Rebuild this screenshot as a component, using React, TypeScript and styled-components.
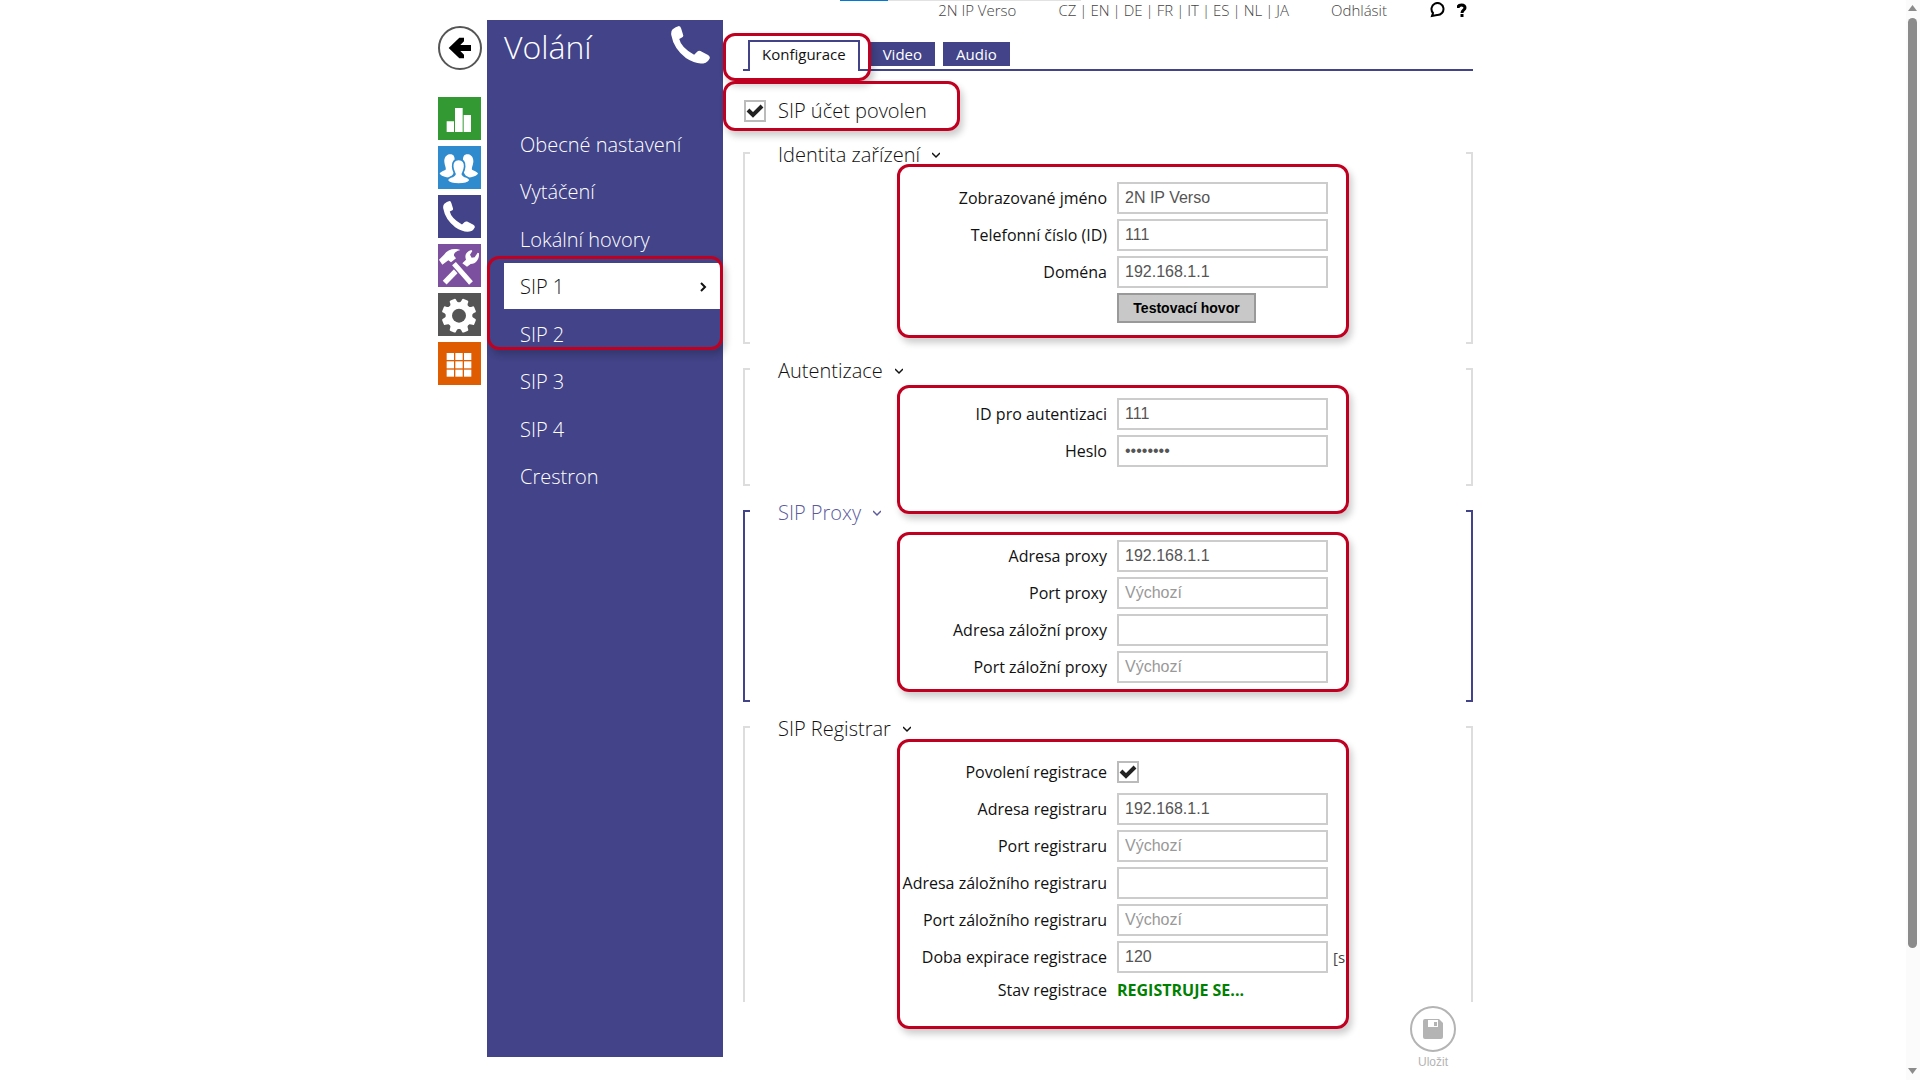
import React, { useState } from "react";
import styled, { createGlobalStyle } from "styled-components";

const indigo = "#424388";
const red = "#c00020";
const uiFont = `"Open Sans", "Noto Sans", sans-serif`;
const fieldFont = `"Liberation Sans", Arial, sans-serif`;

const GlobalStyle = createGlobalStyle`
  *, *::before, *::after { box-sizing: border-box; }
  body {
    margin: 0;
    background: #fff;
    color: #111;
    font-family: ${uiFont};
    font-size: 14px;
    overflow: hidden;
  }
  a { color: inherit; text-decoration: none; }
  svg { display: block; }
`;

const Page = styled.div`
  display: grid;
  grid-template-columns: 1fr 14px;
  height: 100vh;
  overflow: hidden;
`;

const Stage = styled.div`
  padding-left: 5px;
  overflow: hidden;
`;

const Shell = styled.div`
  display: grid;
  grid-template-columns: 44px 236px minmax(0, 1fr);
  column-gap: 5px;
  max-width: 1035px;
  margin: 0 auto;
`;

const Rail = styled.nav`
  display: flex;
  flex-direction: column;
  align-items: flex-start;
  gap: 6px;
  padding-top: 26px;
`;

const BackButton = styled.button`
  display: grid;
  place-items: center;
  width: 44px;
  height: 44px;
  margin-bottom: 21px;
  padding: 0;
  border: 2px solid #555;
  border-radius: 50%;
  background: #fff;
`;

const RailLink = styled.a<{ $color: string }>`
  display: block;
  width: 43px;
  height: 43px;
  background: ${(p) => p.$color};
`;

const Panel = styled.aside`
  align-self: start;
  margin-top: 20px;
  min-height: calc(100vh - 43px);
  padding-left: 17px;
  background: ${indigo};
  color: #fff;
  font-weight: 300;
`;

const PanelHead = styled.header`
  display: flex;
  justify-content: space-between;
  align-items: flex-start;
  height: 100px;
  padding: 6px 13px 0 0;
`;

const PanelTitle = styled.h1`
  margin: 0;
  font-size: 32px;
  line-height: 42px;
  font-weight: 300;
`;

const Menu = styled.div`
  position: relative;
  display: flex;
  flex-direction: column;
  justify-content: space-between;
  height: 379px;
  padding-right: 3px;
`;

const MenuItem = styled.a<{ $active?: boolean }>`
  display: flex;
  align-items: center;
  justify-content: space-between;
  height: 46px;
  padding: 3px 13px 0 16px;
  font-size: 20px;
  line-height: 28px;
  background: ${(p) => (p.$active ? "#fff" : "transparent")};
  color: ${(p) => (p.$active ? "#111" : "#fff")};
`;

const Mark = styled.div<{ $x: number; $y: number; $w: number; $h: number }>`
  position: absolute;
  left: ${(p) => p.$x}px;
  top: ${(p) => p.$y}px;
  width: ${(p) => p.$w}px;
  height: ${(p) => p.$h}px;
  border: 3px solid ${red};
  border-radius: 12px;
  box-shadow: 3px 5px 7px rgba(0, 0, 0, 0.2);
  pointer-events: none;
  z-index: 2;
`;

const Main = styled.main`
  position: relative;
  padding-left: 15px;
`;

const LoadBar = styled.div`
  position: absolute;
  top: 0;
  left: 112px;
  width: 241px;
  height: 1px;
  background: linear-gradient(to right, #0078d7 48px, #e2e2e2 48px);
`;

const TopBar = styled.header`
  display: flex;
  justify-content: flex-end;
  align-items: flex-start;
  gap: 42px;
  height: 40px;
  padding-right: 6px;
  font-size: 15px;
  line-height: 20px;
  font-weight: 300;
  color: #444;
  white-space: nowrap;
`;

const Languages = styled.div`
  display: flex;
  gap: 3px;
`;

const HelpIcons = styled.div`
  display: flex;
  gap: 12px;
  padding-top: 2px;
`;

const Tabs = styled.nav`
  position: relative;
  display: flex;
  align-items: flex-start;
  gap: 8px;
  height: 31px;
  padding-left: 5px;
  border-bottom: 2px solid ${indigo};
  font-size: 15px;
`;

const Tab = styled.a<{ $active?: boolean }>`
  display: flex;
  align-items: center;
  height: ${(p) => (p.$active ? 31 : 24)}px;
  margin-top: ${(p) => (p.$active ? 0 : 2)}px;
  margin-right: ${(p) => (p.$active ? 2 : 0)}px;
  padding: ${(p) => (p.$active ? "0 12px 6px" : "0 13px")};
  border: solid ${indigo};
  border-width: ${(p) => (p.$active ? "2px 2px 0" : "0")};
  background: ${(p) => (p.$active ? "#fff" : indigo)};
  color: ${(p) => (p.$active ? "#111" : "#fff")};
`;

const EnableRow = styled.div`
  position: relative;
  display: flex;
  align-items: center;
  gap: 12px;
  height: 81px;
  padding: 0 1px 2px;
`;

const BigLabel = styled.label`
  font-size: 20px;
  line-height: 28px;
  font-weight: 300;
`;

const CheckWrap = styled.span`
  display: grid;
  width: 22px;
  height: 22px;
  > * { grid-area: 1 / 1; }
  svg { pointer-events: none; }
`;

const CheckInput = styled.input`
  appearance: none;
  width: 22px;
  height: 22px;
  margin: 0;
  border: 2px solid #bbb;
  background: #fff;
  & + svg { visibility: hidden; }
  &:checked + svg { visibility: visible; }
`;

const Group = styled.section<{ $active?: boolean; $open?: boolean }>`
  position: relative;
  display: flex;
  flex-direction: column;
  margin-bottom: ${(p) => (p.$open ? 0 : 24)}px;
  padding-bottom: ${(p) => (p.$open ? 0 : 19)}px;

  &::before,
  &::after {
    content: "";
    position: absolute;
    top: 0;
    bottom: 0;
    width: 7px;
    border: 2px solid ${(p) => (p.$active ? indigo : "#ddd")};
    ${(p) => p.$open && "border-bottom-width: 0;"}
  }
  &::before { left: 0; border-right-width: 0; }
  &::after { right: 0; border-left-width: 0; }
`;

const GroupTitle = styled.h2<{ $active?: boolean }>`
  display: flex;
  align-items: center;
  gap: 12px;
  height: 28px;
  margin: -11px 0 13px 35px;
  font-size: 20px;
  line-height: 28px;
  font-weight: 300;
  color: ${(p) => (p.$active ? "#5a5a9c" : "#111")};
`;

const Rows = styled.div`
  display: grid;
  row-gap: 5px;
`;

const Row = styled.div<{ $short?: boolean }>`
  display: grid;
  grid-template-columns: 364px 211px auto;
  justify-content: start;
  align-items: center;
  column-gap: 10px;
  height: ${(p) => (p.$short ? 24 : 32)}px;
`;

const Label = styled.label`
  text-align: right;
  font-size: 16px;
  line-height: 20px;
  white-space: nowrap;
`;

const TextInput = styled.input`
  width: 100%;
  height: 32px;
  padding: 0 6px;
  border: 2px solid #ccc;
  background: #fff;
  color: #555;
  font-family: ${fieldFont};
  font-size: 16px;
  outline: none;
  &::placeholder { color: #999; opacity: 1; }
`;

const Unit = styled.span`
  margin-left: -5px;
  font-size: 15px;
  color: #444;
`;

const TestButton = styled.button`
  grid-column: 2;
  justify-self: start;
  align-self: start;
  width: 139px;
  height: 30px;
  padding: 0;
  border: 2px solid #999;
  background: #c8c8c8;
  color: #000;
  font-family: ${fieldFont};
  font-size: 14px;
  font-weight: 700;
`;

const Status = styled.output`
  color: #008000;
  font-size: 16px;
  line-height: 20px;
  font-weight: 700;
  white-space: nowrap;
`;

const Footer = styled.footer`
  display: flex;
  justify-content: flex-end;
  padding: 4px 17px 0 0;
`;

const SaveButton = styled.button`
  display: grid;
  justify-items: center;
  row-gap: 3px;
  padding: 0;
  border: 0;
  background: none;
  color: #b4b4b4;
  font-family: ${fieldFont};
  font-size: 12px;
  line-height: 14px;
`;

const SaveRing = styled.span`
  display: grid;
  place-items: center;
  width: 46px;
  height: 46px;
  border: 2px solid #b4b4b4;
  border-radius: 50%;
`;

const ScrollTrack = styled.div`
  display: flex;
  flex-direction: column;
  align-items: center;
  justify-content: space-between;
  padding: 5px 1px 6px 0;
  background: #fbfbfb;
`;

const ScrollThumb = styled.div`
  width: 9px;
  height: 87%;
  margin: 7px 0 auto;
  border-radius: 5px;
  background: #8b8b8b;
`;

const PhoneIcon = ({ size }: { size: number }) => (
  <svg width={size} height={size} viewBox="0 0 118 118" fill="#fff">
    <path d="M5 10Q14 2 24 0Q29 0 31 8L37 28Q38 33 33 35L25 39Q30 64 70 87L80 77Q84 74 89 76L112 88Q119 92 117 98Q112 108 105 111Q80 120 45 97Q8 68 1 28Q-1 16 5 10Z" />
  </svg>
);

const ChartIcon = () => (
  <svg width="43" height="43" viewBox="0 0 129 129" fill="#fff">
    <path d="M26 73h22v32H26zM51 33h23v72H51zM77 54h22v51H77z" />
  </svg>
);

const UsersIcon = () => (
  <svg width="43" height="43" viewBox="0 0 129 129">
    <g fill="#fff">
      <path d="M34 25c10-2 17 4 16 18-1 9-3 15-6 21 0 6 1 10 6 12L38 96C20 93 8 90 5 82c4-6 12-8 18-11 2-5-3-12-4-23-1-12 5-21 15-23z" />
      <path d="M91 25c-10-2-17 4-16 18 1 9 3 15 6 21 0 6-1 10-6 12l12 20c18-3 30-6 33-14-4-6-12-8-18-11-2-5 3-12 4-23 1-12-5-21-15-23z" />
    </g>
    <path
      d="M62 40c13 0 19 9 18 22-1 12-5 17-7 22 1 5 6 7 13 9 6 3 10 6 10 10-5 8-20 11-34 11s-29-3-34-11c0-4 4-7 10-10 7-2 12-4 13-9-2-5-6-10-7-22-1-13 5-22 18-22z"
      fill="#fff"
      stroke="#308bce"
      strokeWidth="5"
    />
  </svg>
);

const ToolsIcon = () => (
  <svg width="43" height="43" viewBox="0 0 129 129">
    <path d="M20 116L58 77" stroke="#fff" strokeWidth="16" />
    <path
      d="M73 58L84 47C79 34 84 23 100 18L103 21L96 32L101 41L110 40L119 26L123 28C124 45 115 59 98 60L87 68Z"
      fill="#fff"
    />
    <path d="M46 58L100 117" stroke="#7c4f9f" strokeWidth="22" />
    <path d="M48 59L99 117" stroke="#fff" strokeWidth="15" />
    <path d="M3 47L18 32C27 19 42 13 60 16L67 18C55 21 47 27 48 35L54 43L39 55L31 49L13 62Z" fill="#fff" />
  </svg>
);

const GearIcon = () => (
  <svg width="43" height="43" viewBox="0 0 129 129">
    <g fill="#fff">
      {[0, 1, 2, 3, 4, 5, 6, 7].map((i) => (
        <path
          key={i}
          d="M46 36C52 30 53 26 53 20Q53 16 57 16H69Q73 16 73 20C73 26 74 30 80 36Z"
          transform={`rotate(${22.5 + i * 45} 63 68)`}
        />
      ))}
      <circle cx="63" cy="68" r="40" />
    </g>
    <circle cx="63" cy="68" r="21" fill="#555" />
  </svg>
);

const GridIcon = () => (
  <svg width="43" height="43" viewBox="0 0 129 129" fill="#fff">
    {[0, 1, 2].map((r) =>
      [0, 1, 2].map((c) => (
        <rect key={`${r}${c}`} x={26 + c * 26} y={33 + r * 25} width="22" height="21" />
      )),
    )}
  </svg>
);

const Chevron = ({ down }: { down?: boolean }) => (
  <svg width="8" height="10" viewBox="0 0 8 10" fill="none" stroke="currentColor" strokeWidth="2">
    {down ? <path d="M0 3L4 7L8 3" strokeWidth="1.5" /> : <path d="M2 1L6 5L2 9" />}
  </svg>
);

const Check = ({ id }: { id: string }) => (
  <CheckWrap>
    <CheckInput type="checkbox" id={id} defaultChecked />
    <svg width="22" height="22" viewBox="0 0 22 22" fill="none" stroke="#222" strokeWidth="4">
      <path d="M4 10L9 15L18 6" />
    </svg>
  </CheckWrap>
);

type FieldProps = {
  id: string;
  label: string;
  value?: string;
  placeholder?: string;
  type?: string;
  unit?: string;
};

const Field = ({ id, label, value = "", placeholder, type = "text", unit }: FieldProps) => {
  const [text, setText] = useState(value);
  return (
    <Row>
      <Label htmlFor={id}>{label}</Label>
      <TextInput
        id={id}
        type={type}
        value={text}
        placeholder={placeholder}
        onChange={(e) => setText(e.target.value)}
      />
      {unit && <Unit>{unit}</Unit>}
    </Row>
  );
};

const menu = [
  "Obecné nastavení",
  "Vytáčení",
  "Lokální hovory",
  "SIP 1",
  "SIP 2",
  "SIP 3",
  "SIP 4",
  "Crestron",
];

const languages = ["CZ", "EN", "DE", "FR", "IT", "ES", "NL", "JA"];

export default function App() {
  return (
    <>
      <GlobalStyle />
      <Page>
        <Stage>
          <Shell>
            <Rail>
              <BackButton aria-label="Zpět">
                <svg width="24" height="22" viewBox="0 0 72 66" fill="#000">
                  <path d="M2 33L34 2H48V13L37 24H69V42H37L48 53V64H34Z" />
                </svg>
              </BackButton>
              <RailLink href="#stav" aria-label="Stav" $color="#339a33"><ChartIcon /></RailLink>
              <RailLink href="#adresar" aria-label="Adresář" $color="#308bce"><UsersIcon /></RailLink>
              <RailLink href="#volani" aria-label="Volání" $color={indigo}>
                <svg width="43" height="43" viewBox="0 0 43 43">
                  <g transform="translate(5 6)"><PhoneIcon size={32} /></g>
                </svg>
              </RailLink>
              <RailLink href="#sluzby" aria-label="Služby" $color="#7c4f9f"><ToolsIcon /></RailLink>
              <RailLink href="#system" aria-label="Systém" $color="#555"><GearIcon /></RailLink>
              <RailLink href="#hardware" aria-label="Hardware" $color="#e05c00"><GridIcon /></RailLink>
            </Rail>

            <Panel>
              <PanelHead>
                <PanelTitle>Volání</PanelTitle>
                <PhoneIcon size={39} />
              </PanelHead>
              <Menu>
                {menu.map((name) => {
                  const active = name === "SIP 1";
                  return (
                    <MenuItem key={name} href="#" $active={active}>
                      {name}
                      {active && <Chevron />}
                    </MenuItem>
                  );
                })}
                <Mark $x={-17} $y={136} $w={236} $h={94} />
              </Menu>
            </Panel>

            <Main>
              <LoadBar />
              <TopBar>
                <span>2N IP Verso</span>
                <Languages>
                  {languages.map((l, i) => (
                    <React.Fragment key={l}>
                      {i > 0 && <span>|</span>}
                      <a href="#">{l}</a>
                    </React.Fragment>
                  ))}
                </Languages>
                <a href="#">Odhlásit</a>
                <HelpIcons>
                  <svg width="16" height="16" viewBox="0 0 16 16" fill="none" stroke="#000" strokeWidth="2">
                    <path d="M4 11A6 6 0 1 1 8 13L3 14Z" />
                  </svg>
                  <svg width="10" height="16" viewBox="0 0 10 16" fill="none" stroke="#000" strokeWidth="3">
                    <path d="M1 6C1 2 8 2 8 6C8 8 5 8 5 11" />
                    <path d="M5 12V15" />
                  </svg>
                </HelpIcons>
              </TopBar>

              <Tabs>
                <Tab href="#" $active>Konfigurace</Tab>
                <Tab href="#">Video</Tab>
                <Tab href="#">Audio</Tab>
                <Mark $x={-20} $y={-7} $w={148} $h={48} />
              </Tabs>

              <EnableRow>
                <Check id="sip-enabled" />
                <BigLabel htmlFor="sip-enabled">SIP účet povolen</BigLabel>
                <Mark $x={-20} $y={10} $w={237} $h={50} />
              </EnableRow>

              <Group>
                <GroupTitle>Identita zařízení <Chevron down /></GroupTitle>
                <Rows>
                  <Field id="name" label="Zobrazované jméno" value="2N IP Verso" />
                  <Field id="number" label="Telefonní číslo (ID)" value="111" />
                  <Field id="domain" label="Doména" value="192.168.1.1" />
                  <Row><TestButton type="button">Testovací hovor</TestButton></Row>
                </Rows>
                <Mark $x={154} $y={12} $w={452} $h={174} />
              </Group>

              <Group>
                <GroupTitle>Autentizace <Chevron down /></GroupTitle>
                <Rows>
                  <Field id="auth-id" label="ID pro autentizaci" value="111" />
                  <Field id="password" label="Heslo" type="password" value="heslo111" />
                </Rows>
                <Mark $x={154} $y={17} $w={452} $h={129} />
              </Group>

              <Group $active>
                <GroupTitle $active>SIP Proxy <Chevron down /></GroupTitle>
                <Rows>
                  <Field id="proxy" label="Adresa proxy" value="192.168.1.1" />
                  <Field id="proxy-port" label="Port proxy" placeholder="Výchozí" />
                  <Field id="proxy2" label="Adresa záložní proxy" />
                  <Field id="proxy2-port" label="Port záložní proxy" placeholder="Výchozí" />
                </Rows>
                <Mark $x={154} $y={22} $w={452} $h={160} />
              </Group>

              <Group $open>
                <GroupTitle>SIP Registrar <Chevron down /></GroupTitle>
                <Rows>
                  <Row>
                    <Label htmlFor="registration">Povolení registrace</Label>
                    <Check id="registration" />
                  </Row>
                  <Field id="registrar" label="Adresa registraru" value="192.168.1.1" />
                  <Field id="registrar-port" label="Port registraru" placeholder="Výchozí" />
                  <Field id="registrar2" label="Adresa záložního registraru" />
                  <Field id="registrar2-port" label="Port záložního registraru" placeholder="Výchozí" />
                  <Field id="expires" label="Doba expirace registrace" value="120" unit="[s" />
                  <Row $short>
                    <Label as="span">Stav registrace</Label>
                    <Status>REGISTRUJE SE...</Status>
                  </Row>
                </Rows>
                <Mark $x={154} $y={13} $w={452} $h={290} />
              </Group>

              <Footer>
                <SaveButton type="button">
                  <SaveRing>
                    <svg width="20" height="20" viewBox="0 0 20 20">
                      <path d="M2 0H16L20 4V18Q20 20 18 20H2Q0 20 0 18V2Q0 0 2 0Z" fill="#b4b4b4" />
                      <path d="M5 1H15V8H5Z" fill="#fff" />
                      <path d="M11 3H14V7H11Z" fill="#b4b4b4" />
                    </svg>
                  </SaveRing>
                  Uložit
                </SaveButton>
              </Footer>
            </Main>
          </Shell>
        </Stage>
        <ScrollTrack aria-hidden="true">
          <svg width="9" height="6" viewBox="0 0 9 6" fill="#8b8b8b"><path d="M0 6L4.500 0L9 6Z" /></svg>
          <ScrollThumb />
          <svg width="9" height="6" viewBox="0 0 9 6" fill="#8b8b8b"><path d="M0 0L4.500 6L9 0Z" /></svg>
        </ScrollTrack>
      </Page>
    </>
  );
}
